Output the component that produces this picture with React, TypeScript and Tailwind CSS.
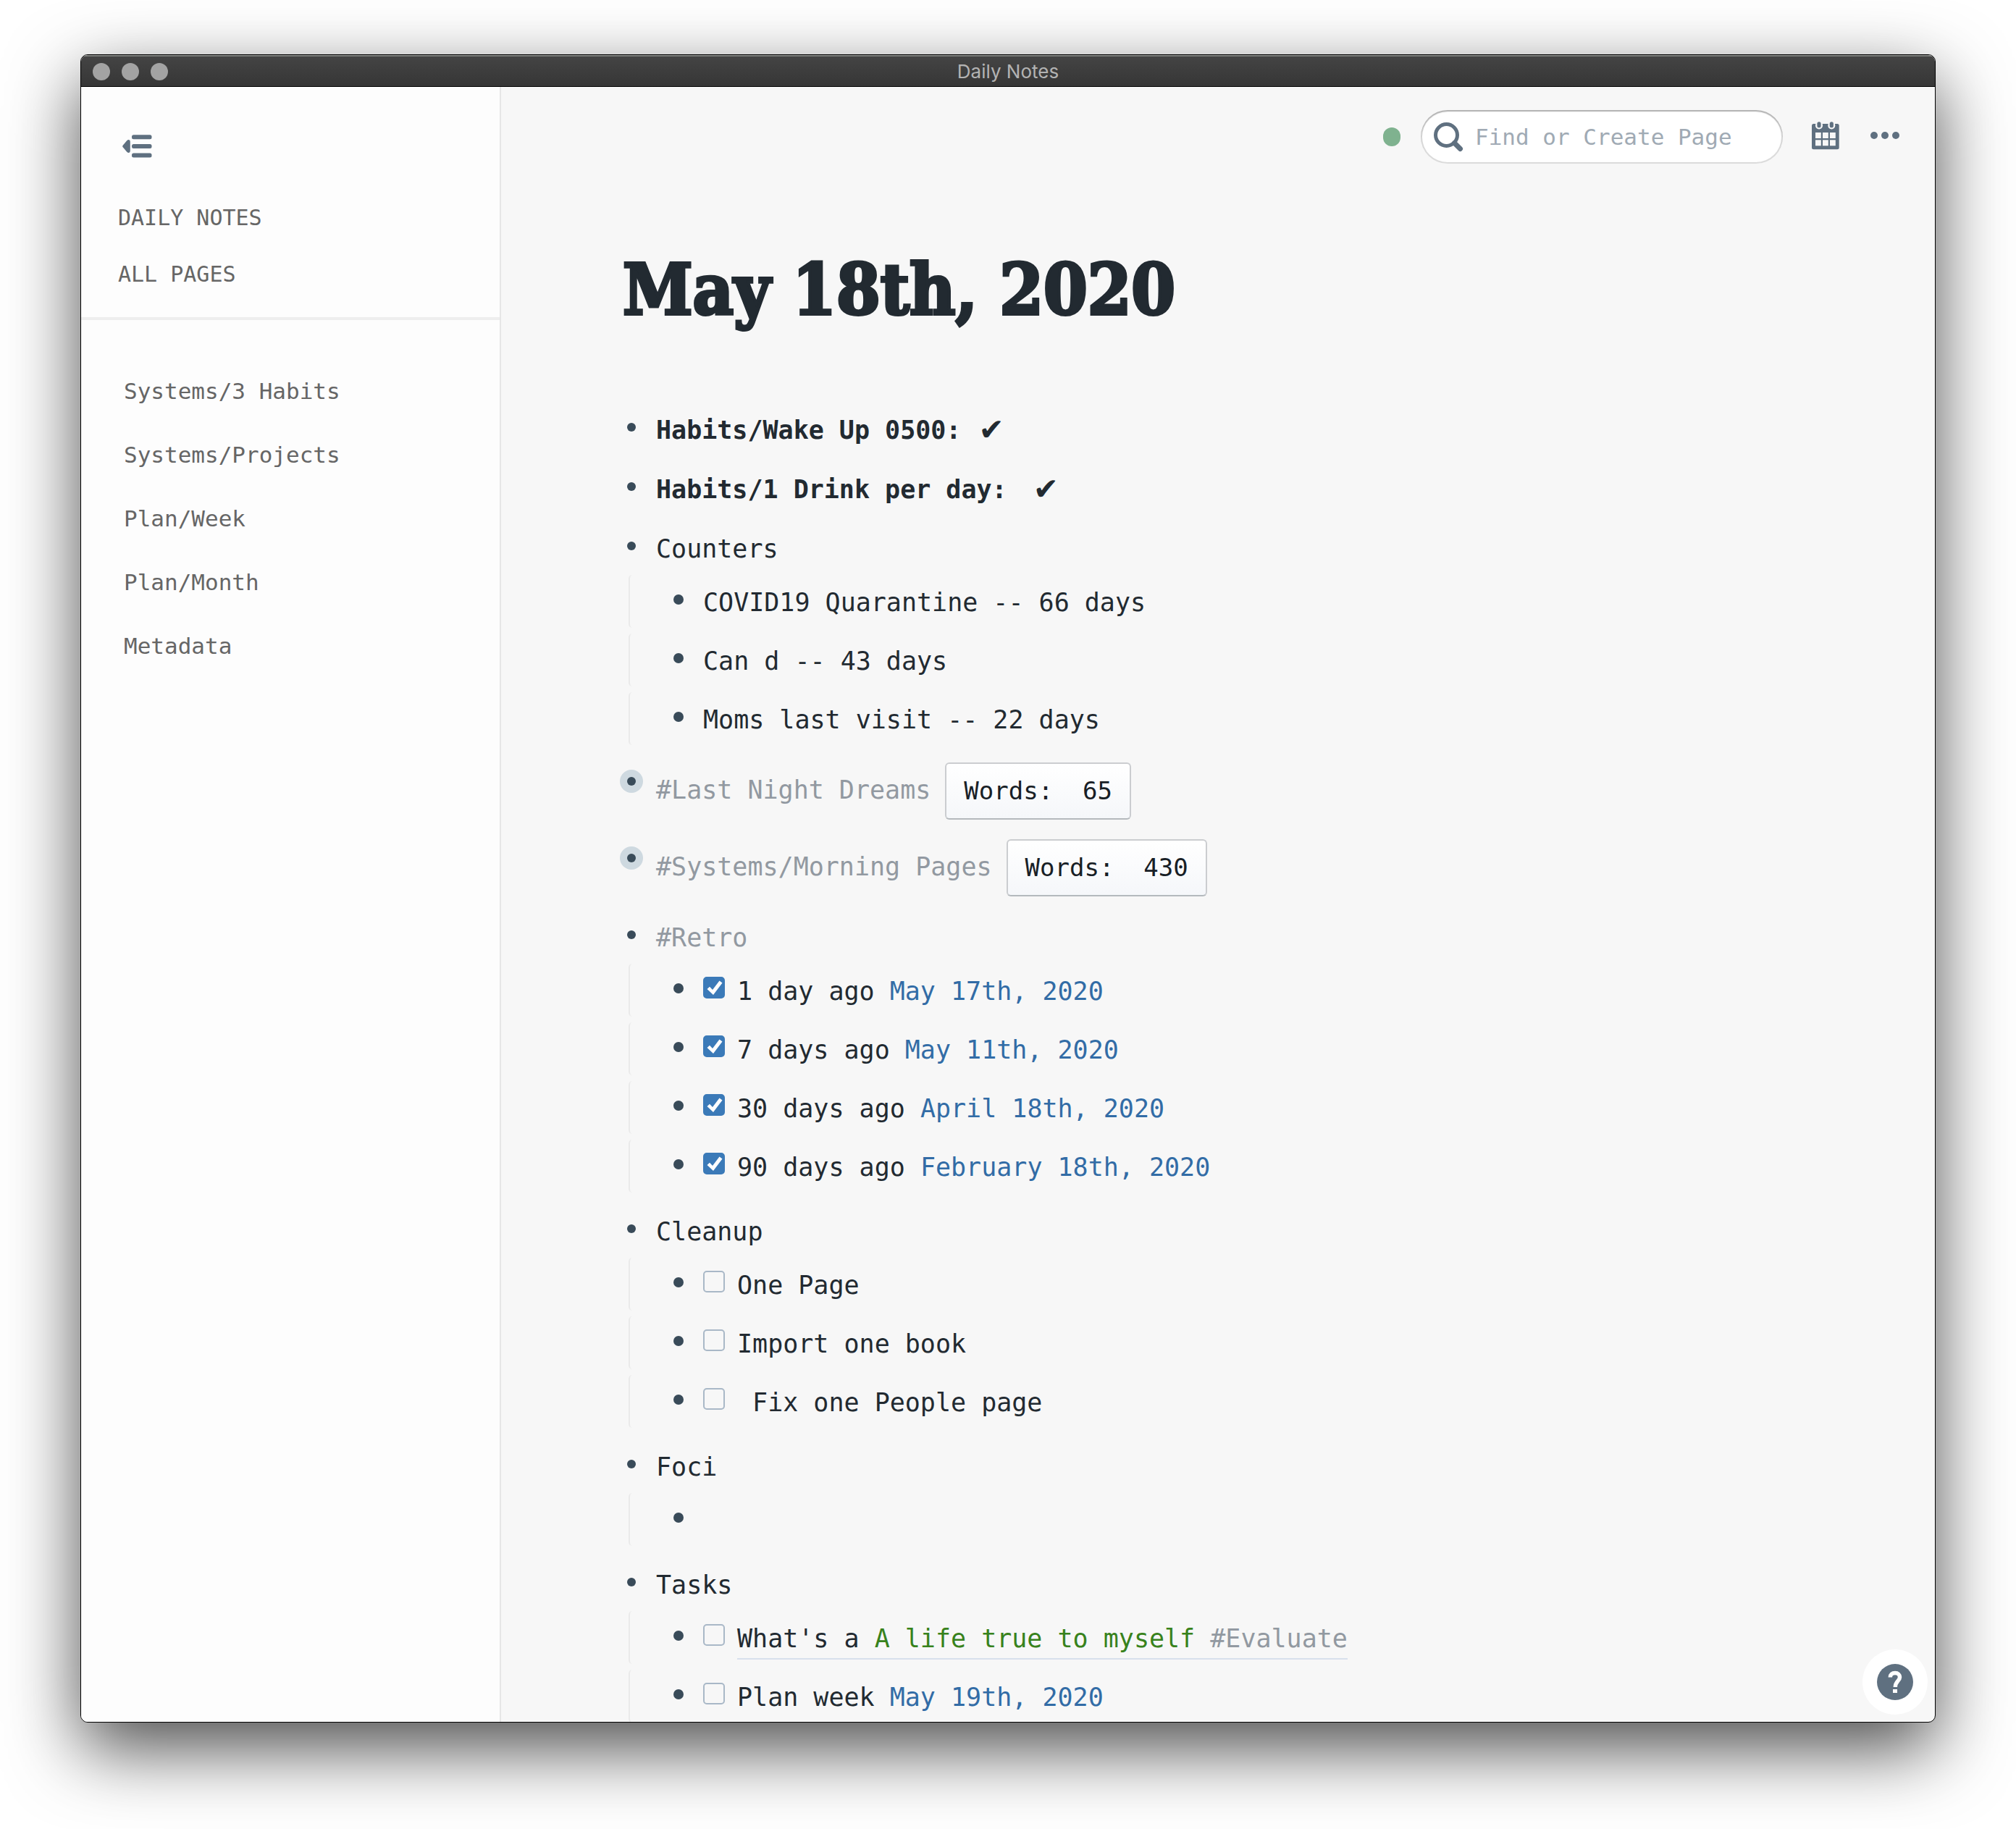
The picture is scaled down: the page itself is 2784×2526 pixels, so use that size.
import React from "react";

type Kind = "text" | "page" | "tag" | "alias";
type Span = { kind: Kind; text: string };
type Child = { spans: Span[]; checked?: boolean; underlined?: boolean };
type Block = {
  spans: Span[];
  bold?: boolean;
  mark?: "near" | "far";
  words?: string;
  children?: Child[];
};

const t = (text: string): Span => ({ kind: "text", text });
const page = (text: string): Span => ({ kind: "page", text });
const tag = (text: string): Span => ({ kind: "tag", text });
const alias = (text: string): Span => ({ kind: "alias", text });

const blocks: Block[] = [
  { spans: [t("Habits/Wake Up 0500:")], bold: true, mark: "near" },
  { spans: [t("Habits/1 Drink per day:")], bold: true, mark: "far" },
  {
    spans: [t("Counters")],
    children: [
      { spans: [t("COVID19 Quarantine -- 66 days")] },
      { spans: [t("Can d -- 43 days")] },
      { spans: [t("Moms last visit -- 22 days")] },
    ],
  },
  { spans: [tag("#Last Night Dreams")], words: "65" },
  { spans: [tag("#Systems/Morning Pages")], words: "430" },
  {
    spans: [tag("#Retro")],
    children: [
      { spans: [t("1 day ago "), page("May 17th, 2020")], checked: true },
      { spans: [t("7 days ago "), page("May 11th, 2020")], checked: true },
      { spans: [t("30 days ago "), page("April 18th, 2020")], checked: true },
      { spans: [t("90 days ago "), page("February 18th, 2020")], checked: true },
    ],
  },
  {
    spans: [t("Cleanup")],
    children: [
      { spans: [t("One Page")], checked: false },
      { spans: [t("Import one book")], checked: false },
      { spans: [t(" Fix one People page")], checked: false },
    ],
  },
  { spans: [t("Foci")], children: [{ spans: [] }] },
  {
    spans: [t("Tasks")],
    children: [
      {
        spans: [t("What's a "), alias("A life true to myself"), t(" "), tag("#Evaluate")],
        checked: false,
        underlined: true,
      },
      { spans: [t("Plan week "), page("May 19th, 2020")], checked: false },
    ],
  },
];

const shortcuts = ["Systems/3 Habits", "Systems/Projects", "Plan/Week", "Plan/Month", "Metadata"];

function SpanView({ span }: { span: Span }) {
  if (span.kind === "page") return <a href="#page" className="text-[#326ca6]">{span.text}</a>;
  if (span.kind === "alias") return <a href="#alias" className="text-[#38821c]">{span.text}</a>;
  if (span.kind === "tag") return <a href="#tag" className="text-[#9299a1]">{span.text}</a>;
  return <>{span.text}</>;
}

function Bullet({ closed, small }: { closed?: boolean; small?: boolean }) {
  return (
    <span
      className={
        closed
          ? "mt-[10px] mr-[18px] flex size-8 shrink-0 items-center justify-center rounded-full bg-[#ced9e0]"
          : "mt-[18px] mr-[18px] flex size-8 shrink-0 items-center justify-center"
      }
    >
      <span className={small ? "size-3 rounded-full bg-[#394b59]" : "size-[14px] rounded-full bg-[#394b59]"} />
    </span>
  );
}

function Check({ checked, label }: { checked: boolean; label: string }) {
  return (
    <span className="relative mt-[18px] mr-[17px] size-[30px] shrink-0">
      <input
        type="checkbox"
        defaultChecked={checked}
        aria-label={label}
        className="peer block size-[30px] appearance-none rounded-[5px] border-2 border-[#a9b8c7] checked:border-[#3b7ab8] checked:bg-[#3b7ab8]"
      />
      <svg
        viewBox="0 0 30 30"
        className="pointer-events-none absolute inset-0 hidden size-[30px] peer-checked:block"
        fill="#fff"
      >
        <path d="M5.500 17L9 13.800L13 18L22.500 5.500L26.500 8.500L14 25Z" />
      </svg>
    </span>
  );
}

function ChildRow({ item }: { item: Child }) {
  const label = item.spans.map((s) => s.text).join("").trim();
  return (
    <li className="flex h-[73px] items-start rounded-l-[5px] border-l-2 border-[#eaeaea] pl-[51px]">
      <Bullet />
      {item.checked !== undefined && <Check checked={item.checked} label={label} />}
      <span
        className={
          item.underlined
            ? "h-[67px] border-b-2 border-[#d8e0ec] leading-[76px] whitespace-pre"
            : "leading-[76px] whitespace-pre"
        }
      >
        {item.spans.map((s, i) => (
          <SpanView key={i} span={s} />
        ))}
      </span>
    </li>
  );
}

function BlockView({ block }: { block: Block }) {
  return (
    <li className={block.children ? "mb-4" : "mb-2"}>
      <div className={block.words ? "flex h-[98px] items-start pt-2" : "flex h-[74px] items-start"}>
        <Bullet small closed={block.words !== undefined} />
        <span className={block.bold ? "font-bold leading-[76px] whitespace-pre" : "leading-[76px] whitespace-pre"}>
          {block.spans.map((s, i) => (
            <SpanView key={i} span={s} />
          ))}
        </span>
        {block.mark && (
          <span
            className={
              block.mark === "near"
                ? "ml-6 font-['DejaVu_Sans'] text-[42px] leading-[76px]"
                : "ml-9 font-['DejaVu_Sans'] text-[42px] leading-[76px]"
            }
          >
            ✔
          </span>
        )}
        {block.words && (
          <button
            type="button"
            className="ml-5 flex h-[79px] items-center rounded-[6px] border-2 border-[#cbcdd0] border-b-[#b4b9bd] bg-linear-to-b from-white to-[#f5f7fa] px-6 text-[34px] whitespace-pre text-[#182026]"
          >
            {"Words:  " + block.words}
          </button>
        )}
      </div>
      {block.children && (
        <ul className="ml-3 flex flex-col gap-2">
          {block.children.map((c, i) => (
            <ChildRow key={i} item={c} />
          ))}
        </ul>
      )}
    </li>
  );
}

function CollapseIcon() {
  return (
    <svg width="41" height="32" viewBox="0 0 41 32" fill="#5f7080">
      <rect x="13" y="0.300" width="27.500" height="6" rx="2.500" />
      <rect x="13" y="13" width="27.500" height="6" rx="2.500" />
      <rect x="13" y="25.500" width="27.500" height="6" rx="2.500" />
      <path d="M0.900 14.400L6.200 8.300C8.300 6.300 10.800 6.800 10.800 10V22C10.800 25.200 8.300 25.700 6.200 23.700L0.900 17.600C0 16.600 0 15.400 0.900 14.400Z" />
    </svg>
  );
}

function SearchIcon() {
  return (
    <svg width="41" height="41" viewBox="0 0 41 41" fill="none" stroke="#5f7080">
      <circle cx="17.500" cy="17.500" r="15" strokeWidth="5" />
      <path d="M28.500 28.500l8 8" strokeWidth="7" strokeLinecap="round" />
    </svg>
  );
}

function CalendarIcon() {
  return (
    <svg width="38" height="39" viewBox="0 0 38 39">
      <rect x="0" y="3" width="37.700" height="35.300" rx="2.500" fill="#5f7080" />
      <g fill="#f7f7f7">
        <rect x="5" y="0" width="10" height="10.500" rx="5" />
        <rect x="22.300" y="0" width="10" height="10.500" rx="5" />
        <rect x="5" y="15" width="7.800" height="8" />
        <rect x="15" y="15" width="7.800" height="8" />
        <rect x="25" y="15" width="7.800" height="8" />
        <rect x="5" y="25.300" width="7.800" height="8" />
        <rect x="15" y="25.300" width="7.800" height="8" />
        <rect x="25" y="25.300" width="7.800" height="8" />
      </g>
      <g fill="#5f7080">
        <rect x="7.400" y="0.300" width="5.200" height="8" rx="2.600" />
        <rect x="24.700" y="0.300" width="5.200" height="8" rx="2.600" />
      </g>
    </svg>
  );
}

function MoreIcon() {
  return (
    <svg width="40" height="10" viewBox="0 0 40 10" fill="#5f7080">
      <circle cx="5" cy="5" r="5" />
      <circle cx="20" cy="5" r="5" />
      <circle cx="35" cy="5" r="5" />
    </svg>
  );
}

function HelpIcon() {
  return (
    <svg width="50" height="50" viewBox="0 0 50 50">
      <circle cx="25" cy="25" r="25" fill="#5f7080" />
      <path
        d="M18.300 18.500C18.300 14.500 21 12.500 25 12.500S31.500 15 31.500 18.300C31.500 23.500 25.300 24 25.300 32"
        fill="none"
        stroke="#fff"
        strokeWidth="5.500"
      />
      <rect x="22" y="35" width="6" height="5" fill="#fff" />
    </svg>
  );
}

export default function App() {
  return (
    <div className="h-screen bg-white px-[111px] pt-[75px] pb-[147px] font-['DejaVu_Sans_Mono',monospace] text-[35px] text-[#222a31]">
      <div className="relative flex h-full flex-col overflow-hidden rounded-[10px] border border-black bg-[#f7f7f7] shadow-[0_36px_100px_rgba(0,0,0,0.7)]">
        <div className="relative flex h-11 shrink-0 items-center justify-center border-t-2 border-b border-t-[#7d7f7c] border-b-black bg-linear-to-b from-[#444444] to-[#363636]">
          <div className="absolute left-4 flex gap-4">
            <span className="size-6 rounded-full bg-[#a3a3a3]" />
            <span className="size-6 rounded-full bg-[#a3a3a3]" />
            <span className="size-6 rounded-full bg-[#a3a3a3]" />
          </div>
          <span className="font-['Inter',sans-serif] text-[26px] leading-none text-[#b3b3b3]">Daily Notes</span>
        </div>

        <div className="flex min-h-0 flex-1">
          <aside className="w-[580px] shrink-0 border-r-2 border-[#e6e6e6] bg-[#fdfdfd] text-[#666666]">
            <button type="button" aria-label="Close menu" className="mt-[66px] ml-[57px] block">
              <CollapseIcon />
            </button>
            <nav className="mt-11 border-b-4 border-[#eeeeee] pb-5 pl-[51px] text-[30px] leading-[78px]">
              <a href="#daily" className="block">DAILY NOTES</a>
              <a href="#pages" className="block">ALL PAGES</a>
            </nav>
            <nav className="pt-[54px] pl-[59px] text-[31px] leading-[88px]">
              {shortcuts.map((s) => (
                <a key={s} href="#shortcut" className="block">{s}</a>
              ))}
            </nav>
          </aside>

          <main className="min-w-0 flex-1 overflow-hidden">
            <header className="flex items-center justify-end pt-8 pr-[49px]">
              <span className="mr-7 h-[26px] w-6 rounded-full bg-[#7fb28f]" />
              <label className="mr-10 flex h-[74px] w-[500px] items-center rounded-full bg-white pl-[18px] shadow-[inset_0_0_0_2px_rgba(0,0,0,0.14),inset_0_2px_2px_rgba(0,0,0,0.2)]">
                <SearchIcon />
                <input
                  type="text"
                  aria-label="Find or Create Page"
                  placeholder="Find or Create Page"
                  className="ml-4 min-w-0 flex-1 bg-transparent text-[31px] outline-none placeholder:text-[#a0aab4] placeholder:opacity-100"
                />
              </label>
              <button type="button" aria-label="Calendar" className="mr-[43px] pb-1">
                <CalendarIcon />
              </button>
              <button type="button" aria-label="More" className="pb-1">
                <MoreIcon />
              </button>
            </header>

            <div className="pl-[164px]">
              <h1 className="mt-[118px] ml-1 font-['DejaVu_Serif_Condensed','DejaVu_Serif',serif] text-[97px] leading-[112px] font-bold [-webkit-text-stroke:4px_#222a31]">
                May 18th, 2020
              </h1>
              <ul className="mt-[100px]">
                {blocks.map((b, i) => (
                  <BlockView key={i} block={b} />
                ))}
              </ul>
            </div>
          </main>
        </div>

        <button
          type="button"
          aria-label="Help"
          className="absolute right-[10px] bottom-[10px] flex size-[90px] items-center justify-center rounded-full bg-white"
        >
          <HelpIcon />
        </button>
      </div>
    </div>
  );
}
